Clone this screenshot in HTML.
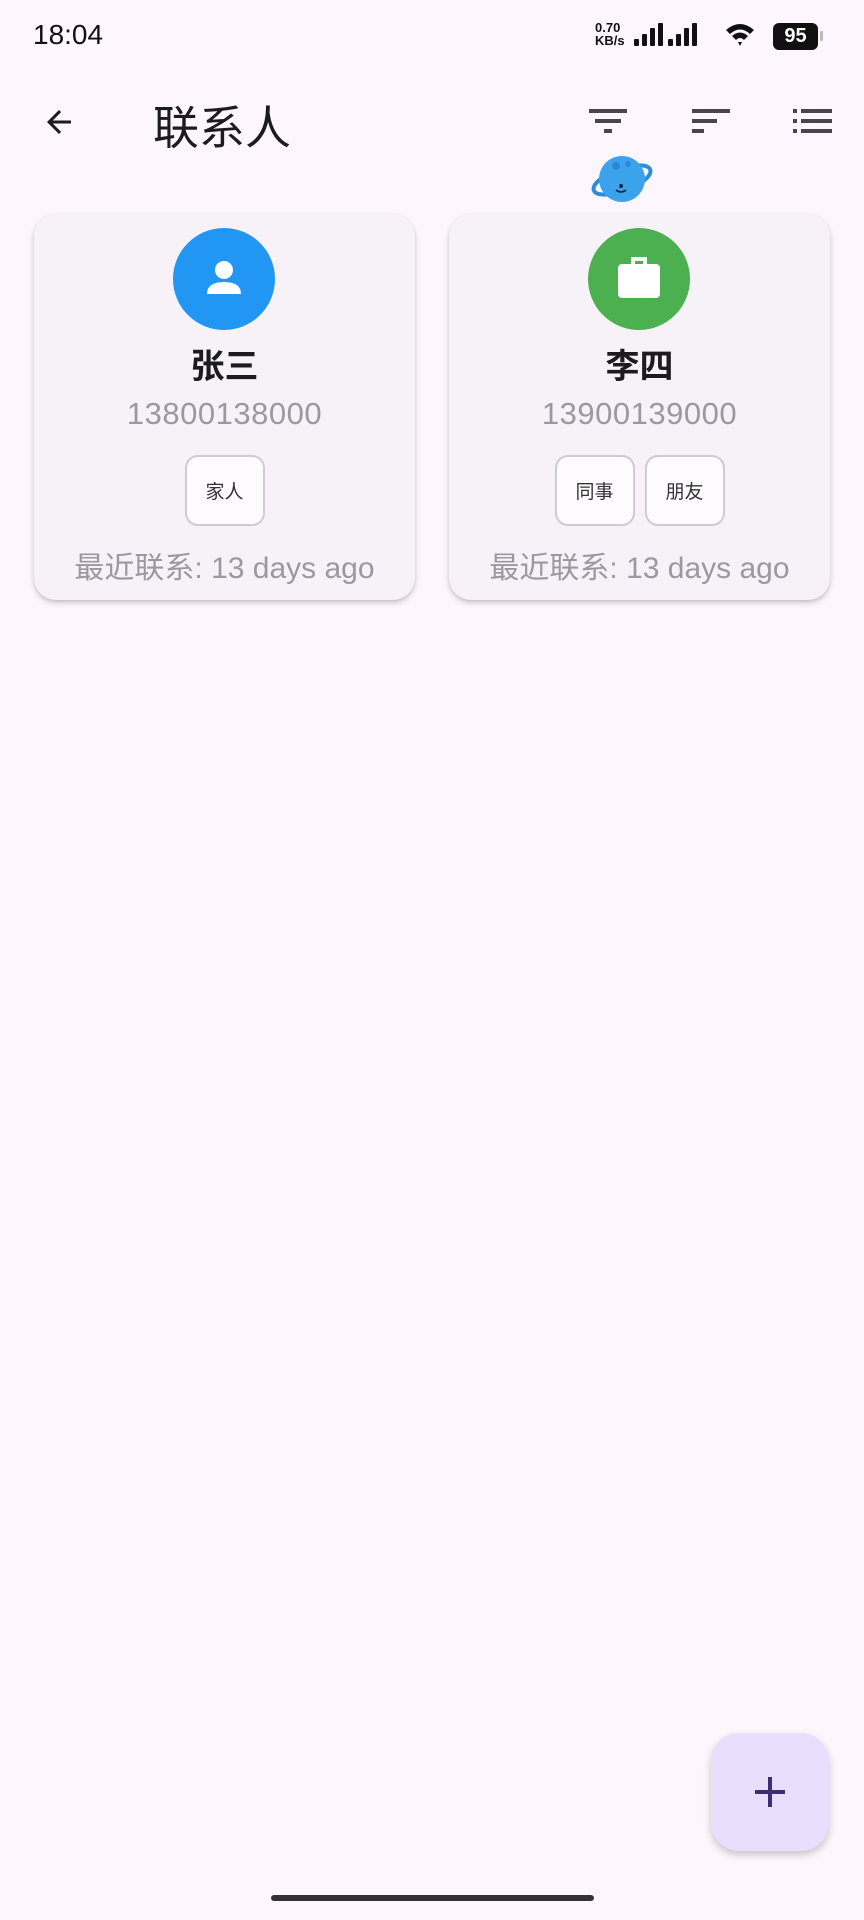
<!DOCTYPE html>
<html><head><meta charset="utf-8"><style>
*{margin:0;padding:0;box-sizing:border-box}
body{width:864px;height:1920px;background:#fdf7fd;font-family:"Liberation Sans","Noto Sans CJK SC",sans-serif;position:relative;overflow:hidden}
.a{position:absolute}
.card{position:absolute;top:214px;width:381px;height:386px;background:#f6f2f8;border-radius:22px;box-shadow:0 3px 6px rgba(0,0,0,.18),0 1px 2px rgba(0,0,0,.08)}
.av{position:absolute;left:139px;top:14px;width:102px;height:102px;border-radius:50%}
.nm{position:absolute;left:0;right:0;top:125px;text-align:center;font-size:34px;font-weight:bold;color:#1c1b1f}
.ph{position:absolute;left:0;right:0;top:182px;text-align:center;font-size:31px;color:#9c98a0;letter-spacing:0.5px}
.chips{position:absolute;left:0;right:0;top:241px;display:flex;justify-content:center;gap:10px}
.chip{width:80px;height:71px;border:2px solid #cfcbd2;border-radius:13px;background:#fdfbfe;font-size:19px;color:#333;display:flex;align-items:center;justify-content:center}
.lc{position:absolute;left:0;right:0;top:329px;text-align:center;font-size:30px;color:#9c98a0}
</style></head><body>
<div class="a" style="left:33px;top:19px;font-size:28px;color:#111">18:04</div>
<div class="a" style="left:595px;top:21px;font-size:13px;line-height:13px;font-weight:bold;color:#111">0.70<br>KB/s</div>
<svg class="a" style="left:634px;top:20px" width="140" height="30" viewBox="0 0 140 30">
<g fill="#111"><rect x="0" y="19" width="5" height="7" rx="1"/><rect x="8" y="14" width="5" height="12" rx="1"/><rect x="16" y="8" width="5" height="18" rx="1"/><rect x="24" y="3" width="5" height="23" rx="1"/>
<rect x="34" y="19" width="5" height="7" rx="1"/><rect x="42" y="14" width="5" height="12" rx="1"/><rect x="50" y="8" width="5" height="18" rx="1"/><rect x="58" y="3" width="5" height="23" rx="1"/>
<path d="M92 10 Q106 -2 120 10 L116 14 Q106 5 96 14Z M98 16 Q106 9 114 16 L110 20 Q106 16 102 20Z M104 22 L108 22 L106 26Z"/></g></svg>
<div class="a" style="left:773px;top:23px;width:45px;height:27px;background:#111;border-radius:6px;color:#fff;font-size:20px;font-weight:bold;text-align:center;line-height:27px">95</div>
<div class="a" style="left:820px;top:31px;width:3px;height:10px;background:#bbb;border-radius:1px"></div>
<svg class="a" style="left:41px;top:104px" width="36" height="36" viewBox="0 0 24 24"><path d="M20 11H7.8l5.6-5.6L12 4l-8 8 8 8 1.4-1.4L7.8 13H20z" fill="#1c1b1f"/></svg>
<div class="a" style="left:153px;top:92px;font-size:46px;color:#1c1b1f">联系人</div>
<svg class="a" style="left:589px;top:106px" width="40" height="30" viewBox="0 0 40 30"><g fill="#49454f"><rect x="0" y="3" width="38" height="4"/><rect x="6" y="13" width="26" height="4"/><rect x="15" y="23" width="8" height="4"/></g></svg>
<svg class="a" style="left:692px;top:106px" width="40" height="30" viewBox="0 0 40 30"><g fill="#49454f"><rect x="0" y="3" width="38" height="4"/><rect x="0" y="13" width="25" height="4"/><rect x="0" y="23" width="12" height="4"/></g></svg>
<svg class="a" style="left:793px;top:106px" width="40" height="30" viewBox="0 0 40 30"><g fill="#49454f"><rect x="0" y="3" width="4" height="4"/><rect x="8" y="3" width="31" height="4"/><rect x="0" y="13" width="4" height="4"/><rect x="8" y="13" width="31" height="4"/><rect x="0" y="23" width="4" height="4"/><rect x="8" y="23" width="31" height="4"/></g></svg>
<svg class="a" style="left:588px;top:150px" width="68" height="60" viewBox="0 0 68 60"><ellipse cx="34" cy="30" rx="30" ry="11" fill="none" stroke="#2a8ee0" stroke-width="4" transform="rotate(-20 34 30)"/><circle cx="34" cy="29" r="23" fill="#3aa3ec"/><circle cx="28" cy="16" r="4" fill="#2b86d8"/><circle cx="40" cy="14" r="3" fill="#2b86d8"/><circle cx="33" cy="36" r="2" fill="#123"/><path d="M28 40 Q33 44 38 40" stroke="#123" stroke-width="1.5" fill="none"/></svg>
<div class="card" style="left:34px">
<div class="av" style="background:#2196f3"><svg width="102" height="102" viewBox="0 0 102 102"><circle cx="51" cy="42" r="9" fill="#fff"/><path d="M34 66 Q34 54 51 54 Q68 54 68 66Z" fill="#fff"/></svg></div>
<div class="nm">张三</div><div class="ph">13800138000</div>
<div class="chips"><div class="chip">家人</div></div>
<div class="lc">最近联系: 13 days ago</div></div>
<div class="card" style="left:449px">
<div class="av" style="background:#4caf50"><svg width="102" height="102" viewBox="0 0 102 102"><path d="M45 36 V31 H57 V36" stroke="#fff" stroke-width="4" fill="none"/><rect x="30" y="36" width="42" height="34" rx="4" fill="#fff"/></svg></div>
<div class="nm">李四</div><div class="ph">13900139000</div>
<div class="chips"><div class="chip">同事</div><div class="chip">朋友</div></div>
<div class="lc">最近联系: 13 days ago</div></div>
<div class="a" style="left:711px;top:1733px;width:118px;height:118px;background:#e9dffd;border-radius:28px;box-shadow:0 4px 8px rgba(0,0,0,.2)"><svg width="118" height="118" viewBox="0 0 118 118"><path d="M59 44 V74 M44 59 H74" stroke="#3f2d74" stroke-width="4"/></svg></div>
<div class="a" style="left:271px;top:1895px;width:323px;height:6px;background:#333;border-radius:3px"></div>
</body></html>
